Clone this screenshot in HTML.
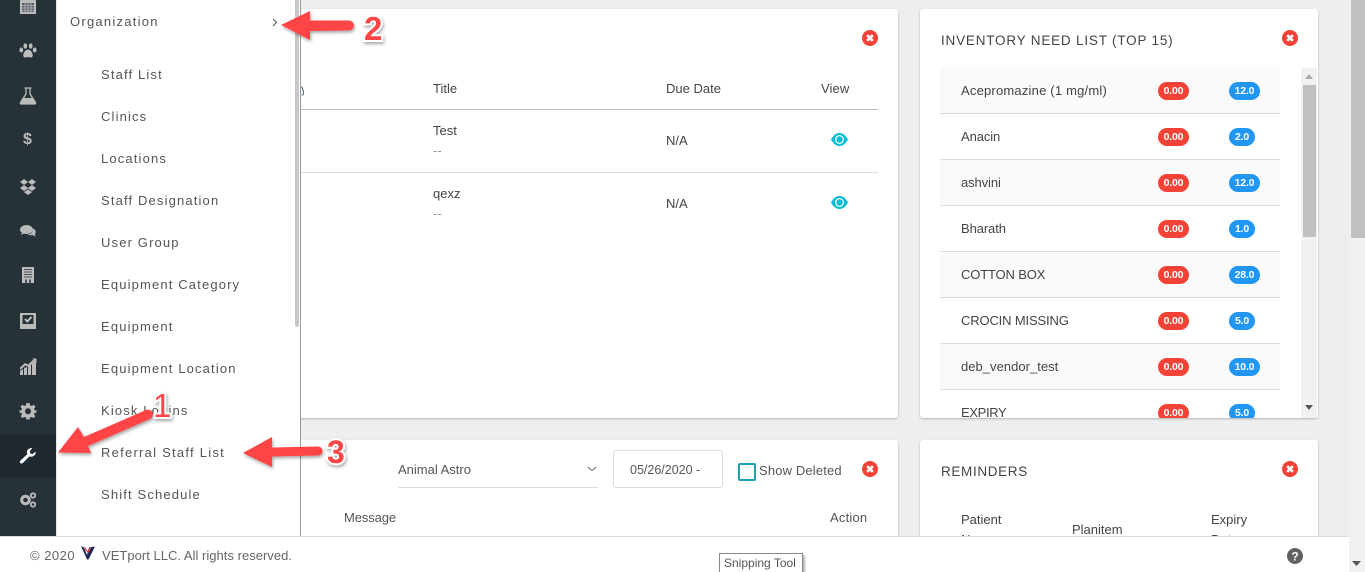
<!DOCTYPE html>
<html><head><meta charset="utf-8">
<style>
html,body{margin:0;padding:0;width:1365px;height:572px;overflow:hidden}
body{background:#eee;font-family:"Liberation Sans",sans-serif;color:#444;font-size:13px}
#p{position:absolute;left:0;top:0;width:1365px;height:572px;overflow:hidden}
#p div,#p svg{position:absolute}
.t{white-space:nowrap;line-height:16px}
.card{background:#fff;border-radius:3px;box-shadow:0 1px 2px rgba(0,0,0,.25)}
.m{left:101px;font-size:13px;letter-spacing:1.15px;color:#555;white-space:nowrap;line-height:16px}
.row{left:940px;width:340px;height:45px;border-bottom:1px solid #ddd}
.row.o{background:#fafafa}
.n{left:961px;font-size:13px;color:#444;white-space:nowrap;line-height:16px;letter-spacing:-.1px}
.b{height:18px;border-radius:9px;color:#fff;font-size:10.5px;font-weight:bold;text-align:center;line-height:18px;letter-spacing:-.2px}
.r{left:1158px;width:31px;background:#f44336}
.bl{left:1229px;background:#2196f3}
.w31{width:31px}.w26{width:26px}
.x{width:16px;height:16px}
.ic{left:19px;width:18px;height:18px}
</style></head><body><div id="p">

<!-- page scrollbar -->
<div style="left:1349px;top:0;width:16px;height:572px;background:#f1f1f1"></div>
<div style="left:1351px;top:0;width:14px;height:238px;background:#c0c0c0"></div>
<svg style="left:1352px;top:561px" width="10" height="6"><path d="M0 0H9L4.500 5Z" fill="#555"/></svg>

<!-- card top-left -->
<div class="card" style="left:280px;top:9px;width:618px;height:409px"></div>
<div class="t" style="left:301px;top:81px;color:#456;font-size:12px;width:3px;overflow:hidden">y</div>
<div class="t" style="left:433px;top:81px;color:#444">Title</div>
<div class="t" style="left:666px;top:81px;">Due Date</div>
<div class="t" style="left:821px;top:81px;letter-spacing:.1px">View</div>
<div style="left:300px;top:109px;width:578px;height:1px;background:#bbb"></div>
<div class="t" style="left:433px;top:123px;">Test</div>
<div class="t" style="left:433px;top:143px;color:#999">--</div>
<div class="t" style="left:666px;top:133px;">N/A</div>
<div style="left:300px;top:172px;width:578px;height:1px;background:#ddd"></div>
<div class="t" style="left:433px;top:186px;">qexz</div>
<div class="t" style="left:433px;top:206px;color:#999">--</div>
<div class="t" style="left:666px;top:196px;">N/A</div>
<svg style="left:831px;top:132px" width="17" height="15" viewBox="0 0 17 15"><path d="M0 7.500C3 2.500 5.500 1 8.500 1S14 2.500 17 7.500C14 12.500 11.500 14 8.500 14S3 12.500 0 7.500Z" fill="#00bcd4"/><circle cx="8.500" cy="7.500" r="4.500" fill="#fff"/><circle cx="8.500" cy="7.500" r="3.200" fill="#00bcd4"/></svg>
<svg style="left:831px;top:195px" width="17" height="15" viewBox="0 0 17 15"><path d="M0 7.500C3 2.500 5.500 1 8.500 1S14 2.500 17 7.500C14 12.500 11.500 14 8.500 14S3 12.500 0 7.500Z" fill="#00bcd4"/><circle cx="8.500" cy="7.500" r="4.500" fill="#fff"/><circle cx="8.500" cy="7.500" r="3.200" fill="#00bcd4"/></svg>
<svg class="x" style="left:862px;top:30px" viewBox="0 0 16 16"><circle cx="8" cy="8" r="8" fill="#f44336"/><path d="M5.200 5.200L10.800 10.800M10.800 5.200L5.200 10.800" stroke="#fff" stroke-width="2.600"/></svg>

<!-- inventory card -->
<div class="card" style="left:920px;top:9px;width:398px;height:409px"></div>
<div class="t" style="left:941px;top:33px;font-size:13.500px;letter-spacing:.8px;color:#444">INVENTORY NEED LIST (TOP 15)</div>
<svg class="x" style="left:1282px;top:30px" viewBox="0 0 16 16"><circle cx="8" cy="8" r="8" fill="#f44336"/><path d="M5.200 5.200L10.800 10.800M10.800 5.200L5.200 10.800" stroke="#fff" stroke-width="2.600"/></svg>

<div class="row o" style="top:68px"></div>
<div class="row" style="top:114px"></div>
<div class="row o" style="top:160px"></div>
<div class="row" style="top:206px"></div>
<div class="row o" style="top:252px"></div>
<div class="row" style="top:298px"></div>
<div class="row o" style="top:344px"></div>

<div class="n" style="top:83px;letter-spacing:.2px">Acepromazine (1 mg/ml)</div>
<div class="n" style="top:129px">Anacin</div>
<div class="n" style="top:175px">ashvini</div>
<div class="n" style="top:221px">Bharath</div>
<div class="n" style="top:267px;letter-spacing:-.15px">COTTON BOX</div>
<div class="n" style="top:313px;letter-spacing:-.15px">CROCIN MISSING</div>
<div class="n" style="top:359px;letter-spacing:.03px">deb_vendor_test</div>

<div class="b r" style="top:82px">0.00</div><div class="b bl w31" style="top:82px">12.0</div>
<div class="b r" style="top:128px">0.00</div><div class="b bl w26" style="top:128px">2.0</div>
<div class="b r" style="top:174px">0.00</div><div class="b bl w31" style="top:174px">12.0</div>
<div class="b r" style="top:220px">0.00</div><div class="b bl w26" style="top:220px">1.0</div>
<div class="b r" style="top:266px">0.00</div><div class="b bl w31" style="top:266px">28.0</div>
<div class="b r" style="top:312px">0.00</div><div class="b bl w26" style="top:312px">5.0</div>
<div class="b r" style="top:358px">0.00</div><div class="b bl w31" style="top:358px">10.0</div>
<div style="left:920px;top:400px;width:381px;height:18px;overflow:hidden">
  <div class="n" style="left:41px;top:5px;letter-spacing:-.35px">EXPIRY</div>
  <div class="b r" style="left:238px;top:4px">0.00</div>
  <div class="b bl w26" style="left:309px;top:4px">5.0</div>
</div>

<!-- inner scrollbar -->
<div style="left:1301px;top:68px;width:16px;height:350px;background:#f1f1f1"></div>
<div style="left:1303px;top:85px;width:13px;height:152px;background:#c0c0c0"></div>
<svg style="left:1305px;top:74px" width="9" height="6"><path d="M0 5H8L4 0Z" fill="#aaa"/></svg>
<svg style="left:1305px;top:405px" width="9" height="6"><path d="M0 0H8L4 5Z" fill="#555"/></svg>

<!-- bottom-left card -->
<div class="card" style="left:280px;top:440px;width:618px;height:110px"></div>
<div class="t" style="left:398px;top:462px;color:#555">Animal Astro</div>
<svg style="left:587px;top:466px" width="10" height="6"><path d="M1 1L5 4.500L9 1" stroke="#666" fill="none"/></svg>
<div style="left:398px;top:487px;width:200px;height:1px;background:#ddd"></div>
<div style="left:613px;top:450px;width:108px;height:36px;border:1px solid #ddd;border-radius:3px;background:#fff"></div>
<div class="t" style="left:630px;top:462px;font-size:12.500px;color:#555">05/26/2020 -</div>
<div style="left:738px;top:463px;width:14px;height:14px;border:2px solid #17a2b8;border-radius:2px"></div>
<div class="t" style="left:759px;top:463px;color:#555;letter-spacing:.15px">Show Deleted</div>
<svg class="x" style="left:862px;top:461px" viewBox="0 0 16 16"><circle cx="8" cy="8" r="8" fill="#f44336"/><path d="M5.200 5.200L10.800 10.800M10.800 5.200L5.200 10.800" stroke="#fff" stroke-width="2.600"/></svg>
<div class="t" style="left:344px;top:510px;color:#555;letter-spacing:-.1px">Message</div>
<div class="t" style="left:830px;top:510px;color:#555;letter-spacing:.2px">Action</div>

<!-- reminders card -->
<div class="card" style="left:920px;top:440px;width:398px;height:110px"></div>
<div class="t" style="left:941px;top:464px;font-size:13.500px;letter-spacing:.65px;color:#444">REMINDERS</div>
<svg class="x" style="left:1282px;top:461px" viewBox="0 0 16 16"><circle cx="8" cy="8" r="8" fill="#f44336"/><path d="M5.200 5.200L10.800 10.800M10.800 5.200L5.200 10.800" stroke="#fff" stroke-width="2.600"/></svg>
<div class="t" style="left:961px;top:512px">Patient</div>
<div class="t" style="left:961px;top:532px">Name</div>
<div class="t" style="left:1072px;top:522px">Planitem</div>
<div class="t" style="left:1211px;top:512px">Expiry</div>
<div class="t" style="left:1211px;top:532px">Date</div>

<!-- sidebar -->
<div style="left:0;top:0;width:56px;height:536px;background:#263238"></div>
<div style="left:0;top:434px;width:56px;height:44px;background:#20292f"></div>

<svg class="ic" style="top:-3px" viewBox="0 0 18 18"><path d="M1 1H17V17H1Z" fill="#bbb"/><path d="M3 6H15V15H3Z" fill="#55606a"/><path d="M3 8.500H15M3 11H15M3 13.500H15M6 6V15M9 6V15M12 6V15" stroke="#bbb" stroke-width=".8"/></svg>
<svg class="ic" style="top:42px" viewBox="0 0 18 18"><g fill="#bbb"><ellipse cx="6.300" cy="4" rx="1.900" ry="2.700"/><ellipse cx="11.700" cy="4" rx="1.900" ry="2.700"/><ellipse cx="2.300" cy="8" rx="1.900" ry="2.500"/><ellipse cx="15.700" cy="8" rx="1.900" ry="2.500"/><path d="M9 7.500C6 7.500 3.500 12 4.500 14.500C5.500 16.500 7.500 15 9 15S12.500 16.500 13.500 14.500C14.500 12 12 7.500 9 7.500Z"/></g></svg>
<svg class="ic" style="top:87px" viewBox="0 0 18 18"><path d="M5.500 1H12.500M7 1.500V7L1.500 15.500C1 16.500 1.500 17 2.500 17H15.500C16.500 17 17 16.500 16.500 15.500L11 7V1.500" fill="none" stroke="#bbb" stroke-width="1.300"/><path d="M4.500 11H13.500L16.500 16.500Q16.500 17 15.500 17H2.500Q1.500 17 1.500 16.500Z" fill="#bbb"/></svg>
<div class="t" style="left:23px;top:132px;font-size:16px;font-weight:bold;color:#bbb">$</div>
<svg class="ic" style="top:178px" viewBox="0 0 18 18"><path d="M5 1L1 4L5 7L1 10L5 13L9 10.500L13 13L17 10L13 7L17 4L13 1L9 4ZM5 7L9 4L13 7L9 10Z M4 13.500L9 17L14 13.500L13 14L9 11.500L5 14Z" fill="#bbb" fill-rule="evenodd"/></svg>
<svg class="ic" style="top:222px" viewBox="0 0 18 18"><ellipse cx="7.500" cy="7.500" rx="6.500" ry="4.500" fill="#bbb"/><path d="M3 10L2 13L6 11Z" fill="#bbb"/><path d="M14 6.500C16.500 7.500 17.500 10 16 12L16.500 14.500L13.500 13C11.500 13.500 9.500 13 8.500 12.500C11.500 12.500 14.500 10 14 6.500Z" fill="#bbb"/></svg>
<svg class="ic" style="top:266px" viewBox="0 0 18 18"><path d="M3 1H15V17H3Z" fill="#bbb"/><path d="M5 3.500H13M5 6H13M5 8.500H13M5 11H13" stroke="#4a555d" stroke-width="1"/><path d="M6 13.500H8V17H6ZM10 13.500H12V17H10Z" fill="#4a555d"/></svg>
<svg class="ic" style="top:312px" viewBox="0 0 18 18"><path d="M1 1H17V17H1Z" fill="#bbb"/><path d="M3.500 3H14.500V12H3.500Z" fill="#263238"/><path d="M6 7L8.300 9.500L12.500 5" fill="none" stroke="#ccc" stroke-width="1.800"/></svg>
<svg class="ic" style="top:358px" viewBox="0 0 18 18"><g fill="#bbb"><path d="M1 13L4 11V17H1ZM5 10L8 9V17H5ZM9 9L12 7V17H9ZM13 6L17 3V17H13Z"/><path d="M1 9.500L6 5L9 6.500L14.500 1.500L13 .500H17.500V5L16.200 3.500L9.500 9L6.500 7.500L1 12Z"/></g></svg>
<svg class="ic" style="top:402px" viewBox="0 0 18 18"><path d="M7.500 1H10.500L11 3.300L12.800 4L14.800 2.800L16.500 5L15 6.700L15.500 8L17.500 8.500V10.500L15.500 11L15 12.500L16.300 14.500L14.500 16L12.700 15L11 15.500L10.500 17.500H7.500L7 15.500L5.300 15L3.500 16L1.700 14.500L3 12.500L2.500 11L.5 10.500V8.500L2.500 8L3 6.700L1.500 5L3.200 2.800L5.200 4L7 3.300ZM9 6.200A3 3 0 1 0 9 12.200A3 3 0 1 0 9 6.200Z" fill="#bbb" fill-rule="evenodd"/></svg>
<svg class="ic" style="top:447px" viewBox="0 0 18 18"><path d="M16.500 4.500L13.800 7L11.300 6.500L10.800 4L13.300 1.300C10.500 .5 7.800 2.500 8 5.500C8 6.300 8.200 7 8.300 7.300L1.500 13.500C.5 14.500 .7 15.500 1.300 16C2 16.700 3 16.700 3.800 16L10.300 9.500C13.800 10.500 17.300 8 16.500 4.500Z" fill="#fff"/></svg>
<svg class="ic" style="top:491px" viewBox="0 0 18 18"><circle cx="6.500" cy="9" r="3.800" fill="none" stroke="#bbb" stroke-width="3"/><circle cx="14" cy="4.500" r="2.200" fill="none" stroke="#bbb" stroke-width="1.800"/><circle cx="14" cy="13.500" r="2.200" fill="none" stroke="#bbb" stroke-width="1.800"/></svg>

<!-- flyout menu -->
<div style="left:56px;top:0;width:244px;height:536px;background:#fff;border-left:1px solid #e6e6e6;box-sizing:border-box"></div>
<div style="left:300px;top:0;width:1px;height:536px;background:#999"></div>
<div style="left:295px;top:0;width:4px;height:327px;background:#c8c8c8;border-radius:0 0 2px 2px"></div>
<div class="t" style="left:70px;top:14px;letter-spacing:1.25px;color:#555">Organization</div>
<svg style="left:272px;top:18px" width="6" height="9"><path d="M1 1L4.500 4.500L1 8" fill="none" stroke="#555"/></svg>
<div class="m" style="top:67px">Staff List</div>
<div class="m" style="top:109px">Clinics</div>
<div class="m" style="top:151px">Locations</div>
<div class="m" style="top:193px">Staff Designation</div>
<div class="m" style="top:235px">User Group</div>
<div class="m" style="top:277px">Equipment Category</div>
<div class="m" style="top:319px">Equipment</div>
<div class="m" style="top:361px">Equipment Location</div>
<div class="m" style="top:403px">Kiosk Logins</div>
<div class="m" style="top:445px;letter-spacing:1.25px">Referral Staff List</div>
<div class="m" style="top:487px">Shift Schedule</div>

<!-- footer -->
<div style="left:0;top:536px;width:1349px;height:36px;background:#fff;border-top:1px solid #ddd;box-sizing:border-box"></div>
<div class="t" style="left:30px;top:548px;color:#666;font-size:13px;letter-spacing:.5px">© 2020</div>
<svg style="left:81px;top:546px" width="14" height="14" viewBox="0 0 14 14"><path d="M0 0L3 1.500L6 9L8 1.500L14 .5L7.500 13.500H6Z" fill="#1c2a5c"/><path d="M3 1.500L7 6L9.500 2" fill="none" stroke="#e53935" stroke-width="1.300"/></svg>
<div class="t" style="left:102px;top:548px;color:#666;font-size:13px;letter-spacing:.02px">VETport LLC. All rights reserved.</div>
<svg style="left:1287px;top:548px" width="16" height="16" viewBox="0 0 16 16"><circle cx="8" cy="8" r="8" fill="#616161"/><text x="8" y="12.500" text-anchor="middle" font-family="Liberation Sans" font-weight="bold" font-size="12" fill="#fff">?</text></svg>

<!-- tooltip -->
<div style="left:719px;top:553px;width:84px;height:19px;background:#fff;border:1px solid #888;border-bottom:none;box-sizing:border-box;box-shadow:2px 2px 2px rgba(0,0,0,.3)"></div>
<div class="t" style="left:724px;top:555px;font-size:12px;color:#555">Snipping Tool</div>

<!-- arrows -->
<svg style="left:0;top:0" width="1365" height="572" viewBox="0 0 1365 572">
<defs><filter id="s" x="-30%" y="-30%" width="160%" height="170%"><feDropShadow dx="1" dy="2" stdDeviation="1.500" flood-color="#000" flood-opacity=".35"/></filter></defs>
<g fill="#ff4444" filter="url(#s)">
<path d="M281 25L310 11V20.500H349A4.500 4.500 0 0 1 349 30.500L310 31V40Z"/>
<path d="M58 452.500L78 427L84 437L146 410A4 4 0 0 1 150 419L88 446L91 453Z"/>
<path d="M243 453L272 437V447.500L318 446.500A4 4 0 0 1 318 455.500L272 456.500V467Z"/>
</g>
<g font-family="Liberation Sans" fill="#ff4444" stroke="#fff" stroke-width="4" paint-order="stroke" filter="url(#s)">
<text x="153" y="417" font-size="33">1</text>
<text x="364" y="40" font-size="33" font-weight="bold">2</text>
<text x="327" y="463" font-size="32" font-weight="bold">3</text>
</g>
</svg>
</div></body></html>
